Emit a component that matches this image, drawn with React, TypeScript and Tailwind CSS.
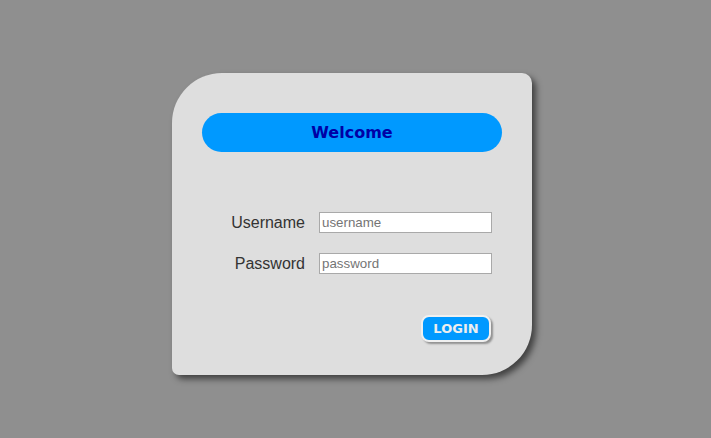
import React from "react";

export default function App() {
  return (
    <main className="min-h-[438px] w-full bg-[#8f8f8f] pl-[172px] pt-[73px]">
      <form
        onSubmit={(e) => e.preventDefault()}
        className="flex h-[302px] w-[360px] flex-col rounded-tl-[50px] rounded-tr-[10px] rounded-br-[50px] rounded-bl-[7px] bg-[#dedede] px-[30px] pt-[40px] shadow-[4px_4px_6px_rgba(0,0,0,0.55)]"
      >
        <div className="flex h-[39px] w-[300px] items-center justify-center rounded-full bg-[#0099ff]">
          <h1 className="font-['DejaVu_Sans',Verdana,sans-serif] text-[16px] font-bold text-[#0000a5]">
            Welcome
          </h1>
        </div>

        <div className="mt-[60px] flex flex-col gap-[20px] pr-[10px] font-['Liberation_Sans',Arial,sans-serif] text-[16px] text-[#333]">
          <label className="flex h-[21px] items-center justify-end">
            <span className="mr-[14px]">Username</span>
            <input
              type="text"
              placeholder="username"
              className="h-[21px] w-[173px] border border-[#a9a9a9] bg-white px-[2px] text-[13.33px] text-[#333] placeholder:text-[#757575] outline-none"
            />
          </label>
          <label className="flex h-[21px] items-center justify-end">
            <span className="mr-[14px]">Password</span>
            <input
              type="password"
              placeholder="password"
              className="h-[21px] w-[173px] border border-[#a9a9a9] bg-white px-[2px] text-[13.33px] text-[#333] placeholder:text-[#757575] outline-none"
            />
          </label>
        </div>

        <div className="mt-[41px] flex justify-end pr-[11px]">
          <button
            type="submit"
            className="h-[27px] w-[70px] rounded-[8px] border-2 border-[#f0f0f0] bg-[#0099ff] font-['DejaVu_Sans',Verdana,sans-serif] text-[13px] font-bold text-[#eeeeee] shadow-[2px_2px_2px_rgba(0,0,0,0.35)]"
          >
            LOGIN
          </button>
        </div>
      </form>
    </main>
  );
}
